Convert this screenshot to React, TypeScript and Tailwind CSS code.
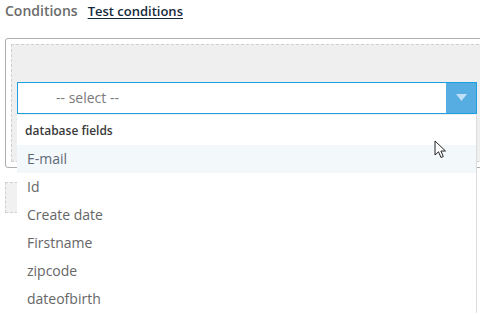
import React from 'react';

const fields = ['E-mail', 'Id', 'Create date', 'Firstname', 'zipcode', 'dateofbirth'];

function Cursor() {
  return (
    <svg className="absolute left-[434px] top-[140px]" width="14" height="20" viewBox="0 0 14 20">
      <path
        d="M1 1 L1 15 L4.5 11.8 L7 17.5 L9.3 16.5 L6.9 11 L11.5 11 Z"
        fill="#fff"
        stroke="#222"
        strokeWidth="1"
        strokeLinejoin="round"
      />
    </svg>
  );
}

export default function App() {
  return (
    <div className="relative w-[480px] h-[315px] overflow-hidden bg-white font-['Open_Sans',sans-serif]">
      {/* header */}
      <div className="flex items-baseline pl-[5px] pt-[1px] h-[38px]">
        <span className="text-[14px] font-semibold text-[#6b6b6b] leading-[20px]">Conditions</span>
        <span className="ml-[10px] text-[13px] font-semibold text-[#172a3c] underline underline-offset-2 leading-[20px]">
          Test conditions
        </span>
      </div>

      {/* condition group */}
      <div className="ml-[5px] w-[520px] h-[130px] border border-[#adadad] rounded-[3px] p-[5px]">
        <div className="h-[118px] border border-dashed border-[#cfcfcf] bg-[#efefef] pl-[5px] pt-[37px]">
          <div className="flex w-[460px] h-[32px] border border-[#1d9fe2] bg-white">
            <div className="flex-1 pl-[38px] text-[14px] leading-[30px] text-[#7a7a7a]">-- select --</div>
            <div className="w-[30px] bg-[#55ade1] flex items-center justify-center">
              <svg width="11" height="8" viewBox="0 0 11 8">
                <path d="M0 0 L11 0 L5.5 7 Z" fill="#bfe0f6" />
              </svg>
            </div>
          </div>
        </div>
      </div>

      {/* next rule placeholder */}
      <div className="ml-[5px] mt-[14px] w-[472px] h-[31px] border border-dashed border-[#cfcfcf] bg-[#f1f1f1]" />

      {/* open dropdown */}
      <div className="absolute left-[17px] top-[115px] w-[460px] bg-white border-r border-[#dcdcdc]">
        <div className="h-[30px] pl-[8px] text-[12px] font-semibold text-[#3a3a3a] leading-[32px]">database fields</div>
        {fields.map((f, i) => (
          <div
            key={f}
            className={
              i === 0
                ? 'h-[28px] pl-[10px] text-[14px] leading-[28px] text-[#5f6973] bg-[#f3f8fb]'
                : 'h-[28px] pl-[10px] text-[14px] leading-[28px] text-[#666]'
            }
          >
            {f}
          </div>
        ))}
      </div>

      <Cursor />
    </div>
  );
}
